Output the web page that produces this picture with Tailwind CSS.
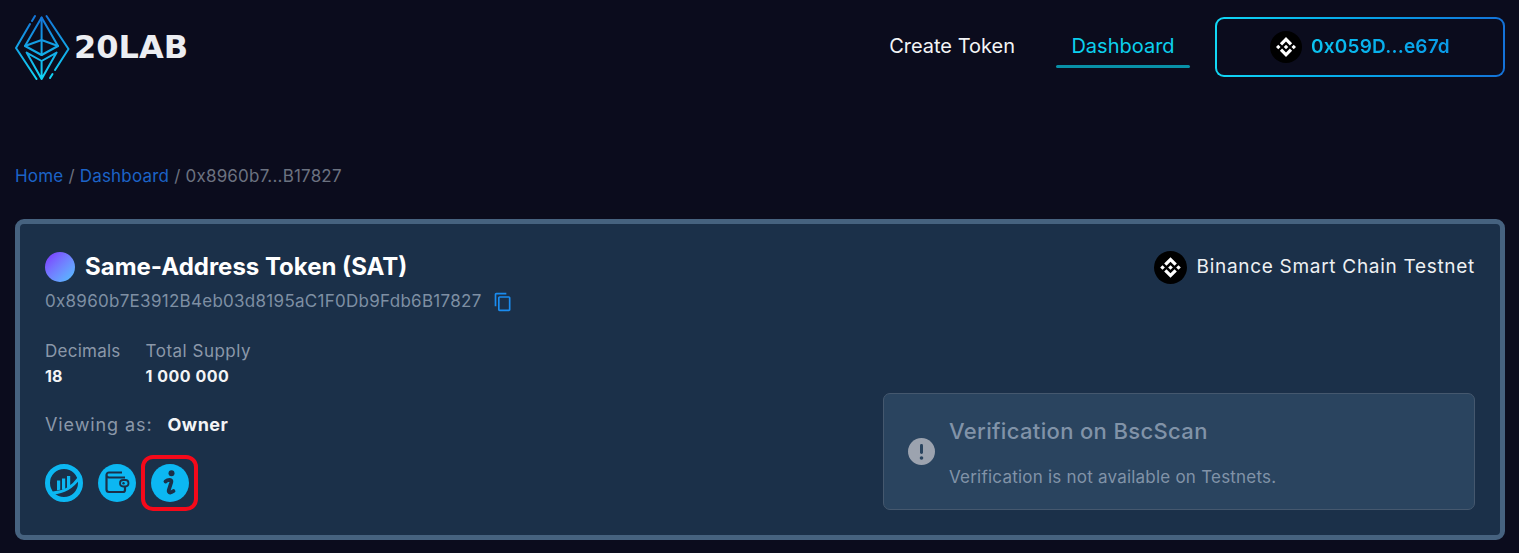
<!DOCTYPE html>
<html lang="en">
<head>
    <meta charset="UTF-8">
    <meta name="viewport" content="width=device-width, initial-scale=1.0">
    <title>20LAB Dashboard</title>
    <script src="https://cdn.jsdelivr.net/npm/@tailwindcss/browser@4"></script>
</head>
<body class="bg-[#0b0c1d] font-['Inter',sans-serif] h-[553px] overflow-hidden">

    <div class="pl-[15px] pr-[14px]">
        <!-- Header -->
        <header class="flex items-center justify-between h-[94px]">
            <div class="flex items-center gap-[4px]">
                <svg width="55" height="67" viewBox="0 0 55 67" fill="none" stroke="url(#logoGrad)" stroke-width="2" stroke-linejoin="round" stroke-linecap="round">
                    <defs>
                        <linearGradient id="logoGrad" gradientUnits="userSpaceOnUse" x1="27" y1="0" x2="27" y2="67">
                            <stop offset="0" stop-color="#1472d8"/>
                            <stop offset="1" stop-color="#12d8f5"/>
                        </linearGradient>
                    </defs>
                    <path d="M20 2 L17 7 M15 10 L1 34 L21.5 65"/>
                    <path d="M31.5 2 L53.5 35 L40 56 M37.5 60 L35 64"/>
                    <path d="M26.6 3.6 L10 32 L26.6 41 L43 32 Z"/>
                    <path d="M26.6 3.6 V41 M10 32 L26.6 26 L43 32"/>
                    <path d="M11.6 38.6 L26.6 65 L41.6 38.6 L26.6 47 Z M26.6 47 V65"/>
                </svg>
                <span class="font-['DejaVu_Sans',sans-serif] font-bold text-[32px] text-[#eceef2] leading-none">20LAB</span>
            </div>
            <nav class="flex items-center">
                <a class="text-[20px] text-[#f3f4f6] mr-[41px] -mt-[3px]">Create Token</a>
                <a class="relative w-[134px] text-center text-[20px] text-[#0cd0ee] mr-[25px] -mt-[3px]">
                    Dashboard
                    <span class="absolute left-0 right-0 top-[34px] h-[3px] rounded-full bg-[#0891a8]"></span>
                </a>
                <div class="w-[290px] h-[60px] rounded-[9px] p-[2px] bg-gradient-to-r from-[#12d8f5] to-[#1472d8]">
                    <div class="w-full h-full rounded-[7px] bg-[#0b0c1d] flex items-center justify-center gap-[9px]">
                        <svg width="32" height="32" viewBox="0 0 32 32">
                            <circle cx="16" cy="16" r="16" fill="#000"/>
                            <path fill="#fff" d="M12.116 14.404L16 10.52l3.886 3.886 2.26-2.26L16 6l-6.144 6.144 2.26 2.26zM6 16l2.26-2.26L10.52 16l-2.26 2.26L6 16zm6.116 1.596L16 21.48l3.886-3.886 2.26 2.259L16 26l-6.144-6.144-.003-.003 2.263-2.257zM21.48 16l2.26-2.26L26 16l-2.26 2.26L21.48 16zm-3.188-.002h.002V16L16 18.294l-2.291-2.29-.004-.004.004-.003.401-.402.195-.195L16 13.706l2.293 2.293z"/>
                        </svg>
                        <span class="font-semibold text-[19px] tracking-[0.2px] bg-gradient-to-r from-[#0cc4f0] to-[#0a9ae8] bg-clip-text text-transparent">0x059D...e67d</span>
                    </div>
                </div>
            </nav>
        </header>

        <!-- Breadcrumb -->
        <div class="mt-[70px] h-[24px] leading-[24px] text-[17px] tracking-[0.2px] text-[#6b7280]">
            <a class="text-[#1c63c7]">Home</a> / <a class="text-[#1c63c7]">Dashboard</a> / 0x8960b7...B17827
        </div>

        <!-- Token card -->
        <section class="mt-[31px] h-[321px] border-[5px] border-[#46627f] rounded-[9px] bg-[#1b3049] p-[25px] flex justify-between">
            <div class="flex flex-col">
                <div class="flex items-center gap-[10px] h-[32px] mt-[2px]">
                    <span class="w-[30px] h-[30px] rounded-full bg-gradient-to-br from-[#7c22ff] to-[#4cc2ff]"></span>
                    <h1 class="font-bold text-[24px] text-white">Same-Address Token (SAT)</h1>
                </div>
                <div class="flex items-center gap-[11px] mt-[5px] h-[28px]">
                    <span class="text-[17px] text-[#7e8fa3] tracking-[0.28px]">0x8960b7E3912B4eb03d8195aC1F0Db9Fdb6B17827</span>
                    <svg width="20" height="20" viewBox="0 0 24 24" fill="#1a8cf0">
                        <path d="M16 1H4c-1.1 0-2 .9-2 2v14h2V3h12V1zm3 4H8c-1.1 0-2 .9-2 2v14c0 1.1.9 2 2 2h11c1.1 0 2-.9 2-2V7c0-1.1-.9-2-2-2zm0 16H8V7h11v14z"/>
                    </svg>
                </div>
                <div class="flex gap-[25px] mt-[23px]">
                    <div>
                        <div class="text-[17px] leading-[24px] tracking-[0.25px] text-[#8b98a9]">Decimals</div>
                        <div class="text-[16px] leading-[24px] font-bold text-[#f3f4f6] mt-[1px]">18</div>
                    </div>
                    <div>
                        <div class="text-[17px] leading-[24px] tracking-[0.5px] text-[#8b98a9]">Total Supply</div>
                        <div class="text-[16px] leading-[24px] font-bold text-[#f3f4f6] mt-[1px] tracking-[0.5px]">1 000 000</div>
                    </div>
                </div>
                <div class="flex items-center gap-[15px] mt-[24px] h-[24px]">
                    <span class="text-[18px] tracking-[0.9px] text-[#8b98a9]">Viewing as:</span>
                    <span class="text-[18px] tracking-[0.5px] font-bold text-[#f3f4f6]">Owner</span>
                </div>
                <div class="flex items-center mt-[28px]">
                    <!-- chart -->
                    <svg width="38" height="38" viewBox="0 0 38 38" class="mr-[15px]">
                        <circle cx="19" cy="19" r="16.500" fill="none" stroke="#0cb7f2" stroke-width="5"/>
                        <path fill="#0cb7f2" d="M12 16.500h3.200v9.300l-3.200.5zM17 14.500h3.200v10.300l-3.200.9zM22 12h3.200v10.500l-3.200 1.600z"/>
                        <path fill="none" stroke="#0cb7f2" stroke-width="3" d="M8 29C18 28.500 27 24 34 14"/>
                    </svg>
                    <!-- wallet -->
                    <svg width="38" height="38" viewBox="0 0 38 38">
                        <circle cx="19" cy="19" r="19" fill="#0cb7f2"/>
                        <path fill="none" stroke="#1b3049" stroke-width="2.200" d="M27 13.500H11a2.500 2.500 0 0 1-2.500-2.500V25.500a2.500 2.500 0 0 0 2.500 2.500h14a2 2 0 0 0 2-2v-3.500M27 15v1.500M8.500 11a2.500 2.500 0 0 1 2.500-2.500h13"/>
                        <rect x="22" y="16" width="8.500" height="6.500" rx="3.200" fill="#0cb7f2" stroke="#1b3049" stroke-width="1.800"/>
                        <circle cx="25.500" cy="19.200" r="1.200" fill="#1b3049"/>
                    </svg>
                    <!-- info, highlighted -->
                    <div class="w-[57px] h-[56px] border-[4px] border-[#f5091a] rounded-[12px] flex items-center justify-center ml-[5px] -my-[9px]">
                        <svg width="38" height="38" viewBox="0 0 38 38">
                            <circle cx="19" cy="19" r="19" fill="#0cb7f2"/>
                            <circle cx="20.500" cy="9.200" r="3" fill="#1b3049"/>
                            <path fill="none" stroke="#1b3049" stroke-width="3.800" stroke-linecap="round" stroke-linejoin="round" d="M14.500 17.500c1.500-1.300 3.500-1.800 5-1.500 1 .3 1 1.300.7 2.500l-2.400 7.500c-.4 1.500.2 2.600 1.500 2.500 1 0 2-.5 3.200-1.400"/>
                        </svg>
                    </div>
                </div>
            </div>

            <div class="flex flex-col justify-between items-end">
                <div class="flex items-center gap-[10px] h-[32px] mt-[2px]">
                    <svg width="33" height="33" viewBox="0 0 32 32">
                        <circle cx="16" cy="16" r="16" fill="#000"/>
                        <path fill="#fff" d="M12.116 14.404L16 10.52l3.886 3.886 2.26-2.26L16 6l-6.144 6.144 2.26 2.26zM6 16l2.26-2.26L10.52 16l-2.26 2.26L6 16zm6.116 1.596L16 21.48l3.886-3.886 2.26 2.259L16 26l-6.144-6.144-.003-.003 2.263-2.257zM21.48 16l2.26-2.26L26 16l-2.26 2.26L21.48 16zm-3.188-.002h.002V16L16 18.294l-2.291-2.29-.004-.004.004-.003.401-.402.195-.195L16 13.706l2.293 2.293z"/>
                    </svg>
                    <span class="text-[19px] tracking-[0.7px] text-[#eef0f3] mt-[1px]">Binance Smart Chain Testnet</span>
                </div>
                <div class="w-[592px] h-[117px] bg-[#2a445f] border border-[#45586e] rounded-[7px] flex items-center pl-[24px]">
                    <svg width="27" height="27" viewBox="0 0 27 27">
                        <circle cx="13.500" cy="13.500" r="13.500" fill="#9ca3af"/>
                        <rect x="12" y="6" width="3" height="10" rx="1.400" fill="#2a445f"/>
                        <circle cx="13.500" cy="20" r="1.800" fill="#2a445f"/>
                    </svg>
                    <div class="ml-[14px] pt-[2px]">
                        <div class="text-[22px] leading-[30px] font-medium tracking-[0.35px] text-[#8193a8]">Verification on BscScan</div>
                        <div class="text-[17px] leading-[24px] mt-[19px] tracking-[0.22px] text-[#8193a8]">Verification is not available on Testnets.</div>
                    </div>
                </div>
            </div>
        </section>
    </div>

</body>
</html>
